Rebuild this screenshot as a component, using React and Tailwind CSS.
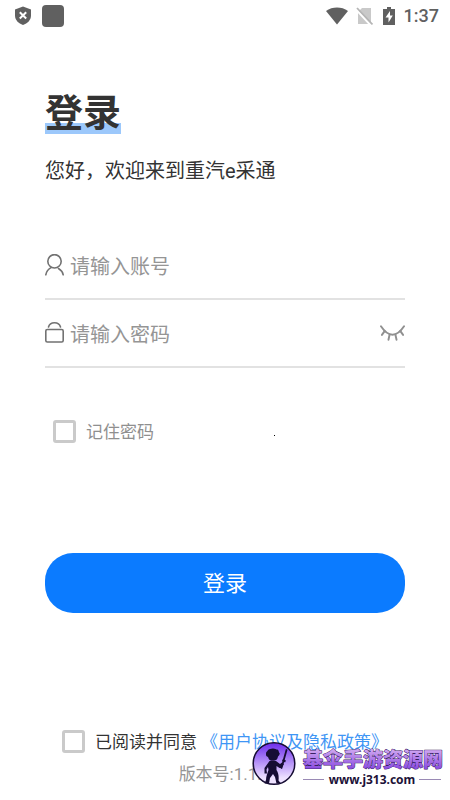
import React, { useState } from 'react'

const checkboxStyles =
  'size-[23px] shrink-0 appearance-none rounded-[3px] border-[3px] border-[#cacaca] bg-white checked:border-[#0b7bff] checked:bg-[#0b7bff]'

const inputStyles =
  'min-w-0 flex-1 bg-transparent pt-1 text-xl text-[#333333] outline-none placeholder:text-[#959595]'

const StatusBar = () => (
  <header className="flex h-8 items-center justify-between pr-[11px] pl-[14px] text-[#606060]">
    <div className="flex items-center gap-[10px]">
      <svg className="h-[20px] w-[18px]" viewBox="0 0 18 20" fill="none">
        <path d="M9 .5 17 3.500V9.500C17 14 13.500 17.500 9 19 4.500 17.500 1 14 1 9.500V3.500Z" fill="#606060" />
        <path d="M5.800 6.300 12.200 12.500M12.200 6.300 5.800 12.500" stroke="#fff" strokeWidth="2" />
      </svg>
      <span className="size-[22px] rounded-[4px] bg-[#606060]" />
    </div>
    <div className="flex items-center">
      <svg className="h-[19px] w-[22px]" viewBox="0 0 22 19">
        <path d="M0 4C6.500-.6 15.500-.6 22 4L11 17.500Z" fill="#606060" />
      </svg>
      <svg className="ml-[8px] h-[19px] w-[17px]" viewBox="0 0 17 19" fill="none">
        <path d="M6 1H15V17H2V5Z" fill="#c9c9c9" />
        <path d="M1 3.500 14.500 18" stroke="#fff" strokeWidth="2" />
        <path d="M1 1 16.500 17.500" stroke="#b5b5b5" strokeWidth="1.800" />
      </svg>
      <svg className="ml-[10px] h-[19px] w-[12px]" viewBox="0 0 12 19">
        <path d="M4 0H8V2H12V18H0V2H4Z" fill="#606060" />
        <path d="M7 4 2.500 10.500H5.500V15.500L9.800 8.500H7Z" fill="#fff" />
      </svg>
      <span className="ml-[9px] font-[Roboto,sans-serif] text-lg font-medium">1:37</span>
    </div>
  </header>
)

const UserIcon = () => (
  <svg className="h-[22px] w-[19px] shrink-0" viewBox="0 0 19 22" fill="none" stroke="#727272" strokeWidth="1.600" strokeLinecap="round">
    <circle cx="9.500" cy="7.300" r="6.700" />
    <path d="M.8 20.800C1.300 18 3 15.300 6 13.600M13.500 14.500C16 16 17.700 18 18.200 20.800" />
  </svg>
)

const LockIcon = () => (
  <svg className="h-[22px] w-[19px] shrink-0" viewBox="0 0 19 22" fill="none" stroke="#727272" strokeWidth="1.600" strokeLinecap="round">
    <rect x=".8" y="7.500" width="17.400" height="12.500" rx="1.500" />
    <path d="M3.500 5C5-.6 14-.6 15.500 5" />
  </svg>
)

const ClosedEyeIcon = () => (
  <svg className="h-[18px] w-[25px]" viewBox="0 0 26 18" fill="none" stroke="#909090" strokeWidth="2" strokeLinecap="round">
    <path d="M1 2C4 6.500 8 10.800 13 10.800S22 6.500 25 2" />
    <path d="M4.800 7 2 11M10 10.500 8.800 16M16 10.500 17.200 16M21.200 7 24 11" />
  </svg>
)

const SiteBadge = () => (
  <svg
    className="pointer-events-none absolute right-[4px] bottom-[8px] h-[52px] w-[194px]"
    viewBox="0 0 194 52"
    aria-label="基伞手游资源网"
  >
    <defs>
      <linearGradient id="badge-disc" x1="0" y1="0" x2="0" y2="1">
        <stop offset="0.050" stopColor="#7436ee" />
        <stop offset="0.850" stopColor="#eee2ff" />
      </linearGradient>
      <linearGradient id="badge-name" x1="0" y1="0" x2="0" y2="1">
        <stop offset="0.200" stopColor="#cfa6f0" />
        <stop offset="0.900" stopColor="#8545df" />
      </linearGradient>
    </defs>
    <circle cx="22" cy="23.500" r="20.800" fill="url(#badge-disc)" stroke="#160d33" strokeWidth="1.500" />
    <g fill="#160d33">
      <path d="M14 14C13.500 12 15.500 11.500 16 10 17.500 8.500 19 9 20.500 8.500 22.500 8 24 9.500 25.500 9.500 27 10.500 26.500 12 27.800 13.500 27.500 15 26.500 16 26 16.500 25.500 19 24.500 20.500 22 20.800H19C17 20 16.500 18.500 16 17 14.500 16.500 13.800 15.500 14 14Z" />
      <path d="M17.500 21H24L28 24 30 22.500 32 24 29.500 28 27.500 28 24.500 26 24.500 30C26.500 33 27 37 26.500 40.500L29 43.500H24.500L23 37 21 34 18 38 17 43.500H12.500L14 40C14 36 15.500 33 16.500 30L16 27 14.500 29.500 15 33.500H12.500L12.500 28Z" />
    </g>
    <path d="M29.500 28 34.500 10" stroke="#160d33" strokeWidth="1.800" strokeLinecap="round" />
    <path d="M30.500 20 33.500 21.500" stroke="#160d33" strokeWidth="2" />
    <text
      x="51"
      y="27"
      className="font-['Noto_Sans_CJK_SC',sans-serif] text-[20px] font-black"
      fill="url(#badge-name)"
      stroke="#3a2264"
      strokeWidth="1"
      strokeLinejoin="round"
      paintOrder="stroke"
    >
      基伞手游资源网
    </text>
    <path d="M51 39.500H72M167 39.500H189" stroke="#9a8ab5" />
    <text
      x="120"
      y="44"
      textAnchor="middle"
      className="font-['Noto_Sans',sans-serif] text-[12px] font-bold"
      fill="#1c1238"
    >
      www.j313.com
    </text>
  </svg>
)

const App = () => {
  const [showPassword, setShowPassword] = useState(false)

  return (
    <div className="relative flex min-h-screen flex-col bg-white font-[Roboto,'Noto_Sans_CJK_SC',sans-serif] text-[#333333]">
      <StatusBar />

      <form className="flex flex-col px-[45px] pt-[60px]" onSubmit={(e) => e.preventDefault()}>
        <h1 className="self-start bg-linear-to-t from-[#9cc8fb] from-25% to-transparent to-25% pt-[2px] pb-[2px] text-[38px] leading-[38px] font-bold">
          登录
        </h1>
        <p className="mt-[21px] text-xl leading-8">您好，欢迎来到重汽e采通</p>

        <div className="mt-[45px] flex h-[68px] items-center gap-[6px] border-b-2 border-[#e2e2e2]">
          <UserIcon />
          <input className={inputStyles} type="text" placeholder="请输入账号" aria-label="账号" />
        </div>
        <div className="flex h-[68px] items-center gap-[6px] border-b-2 border-[#e2e2e2]">
          <LockIcon />
          <input
            className={inputStyles}
            type={showPassword ? 'text' : 'password'}
            placeholder="请输入密码"
            aria-label="密码"
          />
          <button type="button" aria-label="显示密码" onClick={() => setShowPassword(!showPassword)}>
            <ClosedEyeIcon />
          </button>
        </div>

        <div className="mt-[48px] flex items-center pl-2">
          <label className="flex items-center gap-[10px] text-[17px] leading-7 text-[#8f8f8f]">
            <input type="checkbox" className={checkboxStyles} />
            <span className="pt-[2px]">记住密码</span>
          </label>
          <span className="mt-2 ml-[120px] size-px bg-black" />
        </div>

        <button type="submit" className="mt-[107px] h-[60px] rounded-[28px] bg-[#0b7bff] text-[22px] text-white">
          登录
        </button>
      </form>

      <footer className="mt-auto flex flex-col items-center pt-10 pb-[10px] text-[17px]">
        <div className="flex items-center gap-1">
          <label className="flex items-center gap-[10px] leading-7">
            <input type="checkbox" className={checkboxStyles} />
            <span className="pt-[2px]">已阅读并同意</span>
          </label>
          <a href="#policy" className="pt-[2px] leading-7 text-[#3f96f5]">
            《用户协议及隐私政策》
          </a>
        </div>
        <p className="mt-[2px] leading-8 text-[#959595]">版本号:1.1.0</p>
      </footer>

      <SiteBadge />
    </div>
  )
}

export default App
